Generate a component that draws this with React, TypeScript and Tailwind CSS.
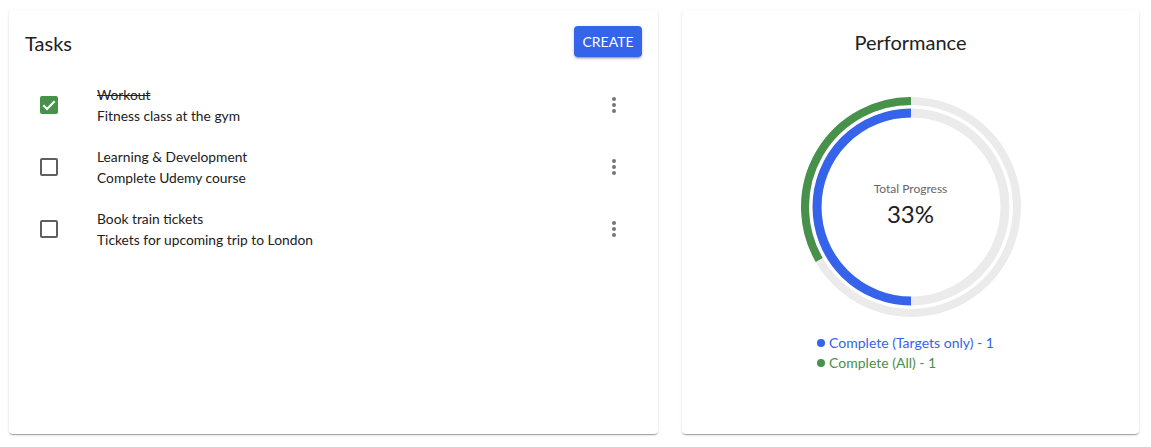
import React from 'react'

// ─── Types ───────────────────────────────────────────────────────────────────

interface Task {
  id: number
  title: string
  detail: string
  done: boolean
}

// ─── Constants ───────────────────────────────────────────────────────────────

const TASKS: Task[] = [
  { id: 1, title: 'Workout', detail: 'Fitness class at the gym', done: true },
  { id: 2, title: 'Learning & Development', detail: 'Complete Udemy course', done: false },
  { id: 3, title: 'Book train tickets', detail: 'Tickets for upcoming trip to London', done: false },
]

const CARD =
  'bg-white rounded-[4px] shadow-[0_2px_1px_-1px_rgba(0,0,0,0.2),0_1px_1px_0_rgba(0,0,0,0.14),0_1px_3px_0_rgba(0,0,0,0.12)]'

const C = 112

// point on a circle, measured counter-clockwise from 12 o'clock
function ccwPoint(r: number, frac: number) {
  const a = frac * Math.PI * 2
  return { x: C - r * Math.sin(a), y: C - r * Math.cos(a) }
}

function arcPath(r: number, frac: number) {
  const end = ccwPoint(r, frac)
  const large = frac > 0.5 ? 1 : 0
  return `M ${C} ${C - r} A ${r} ${r} 0 ${large} 0 ${end.x} ${end.y}`
}

// ─── Sub-components ──────────────────────────────────────────────────────────

function Checkbox({ checked }: { checked: boolean }) {
  if (checked) {
    return (
      <span className="w-[18px] h-[18px] rounded-[2px] bg-[#47914a] flex items-center justify-center">
        <svg width="16" height="16" viewBox="0 0 24 24" fill="none">
          <path d="M3.5 12.5l5.5 5.5L20.5 6.5" stroke="#fff" strokeWidth="3.2" />
        </svg>
      </span>
    )
  }
  return <span className="w-[18px] h-[18px] rounded-[2px] border-2 border-[#5f5f5f] box-border" />
}

function MoreVert() {
  return (
    <svg width="24" height="24" viewBox="0 0 24 24" fill="#757575">
      <circle cx="12" cy="6" r="2" />
      <circle cx="12" cy="12" r="2" />
      <circle cx="12" cy="18" r="2" />
    </svg>
  )
}

function TaskRow({ task }: { task: Task }) {
  return (
    <div className="h-[62px] flex items-center pl-[15px] pr-[16px]">
      <Checkbox checked={task.done} />
      <div className="ml-[39px] flex-1 text-[13.8px] leading-[21px] text-[#212121]">
        <p className={task.done ? 'line-through' : ''}>{task.title}</p>
        <p>{task.detail}</p>
      </div>
      <MoreVert />
    </div>
  )
}

function Donut() {
  return (
    <div className="relative w-[224px] h-[224px]">
      <svg width="224" height="224" viewBox="0 0 224 224" fill="none">
        <circle cx={C} cy={C} r="106" stroke="#ebebeb" strokeWidth="8" />
        <circle cx={C} cy={C} r="94" stroke="#ebebeb" strokeWidth="9" />
        <path d={arcPath(106, 1 / 3)} stroke="#47914a" strokeWidth="8" />
        <path d={arcPath(94, 0.5)} stroke="#3563e9" strokeWidth="9" />
      </svg>
      <div className="absolute inset-0 flex flex-col items-center justify-center pb-[4px]">
        <p className="text-[12px] leading-[15px] text-[#666]">Total Progress</p>
        <p className="text-[24px] leading-[30px] text-[#212121] mt-[3px]">33%</p>
      </div>
    </div>
  )
}

// ─── Main Component ───────────────────────────────────────────────────────────

export default function App() {
  return (
    <div
      className="w-[1151px] h-[447px] bg-white flex gap-[24px] pl-[9px] pt-[10px]"
      style={{ fontFamily: 'Lato, "Open Sans", sans-serif' }}
    >
      {/* Tasks */}
      <div className={`${CARD} w-[649px] h-[424px] p-4`}>
        <div className="h-[31px] flex items-center justify-between">
          <h2 className="text-[20px] leading-[32px] text-[#212121] mt-[2px]">Tasks</h2>
          <button
            type="button"
            className="h-[31px] w-[68px] rounded-[4px] bg-[#3563e9] text-white text-[14px] shadow-[0_3px_1px_-2px_rgba(0,0,0,0.2),0_2px_2px_0_rgba(0,0,0,0.14),0_1px_5px_0_rgba(0,0,0,0.12)]"
          >
            CREATE
          </button>
        </div>
        <div className="mt-[17px]">
          {TASKS.map(t => (
            <TaskRow key={t.id} task={t} />
          ))}
        </div>
      </div>

      {/* Performance */}
      <div className={`${CARD} w-[457px] h-[424px] flex flex-col items-center pt-[17px]`}>
        <h2 className="text-[20px] leading-[32px] text-[#212121] -mt-[1px]">Performance</h2>
        <div className="mt-[37px]">
          <Donut />
        </div>
        <div className="mt-[14px] text-[14px] leading-[20px] mr-[10px]">
          <div className="flex items-center gap-[4px] text-[#3563e9]">
            <span className="w-[8px] h-[8px] rounded-full bg-[#3563e9]" />
            Complete (Targets only) - 1
          </div>
          <div className="flex items-center gap-[4px] text-[#47914a]">
            <span className="w-[8px] h-[8px] rounded-full bg-[#47914a]" />
            Complete (All) - 1
          </div>
        </div>
      </div>
    </div>
  )
}
